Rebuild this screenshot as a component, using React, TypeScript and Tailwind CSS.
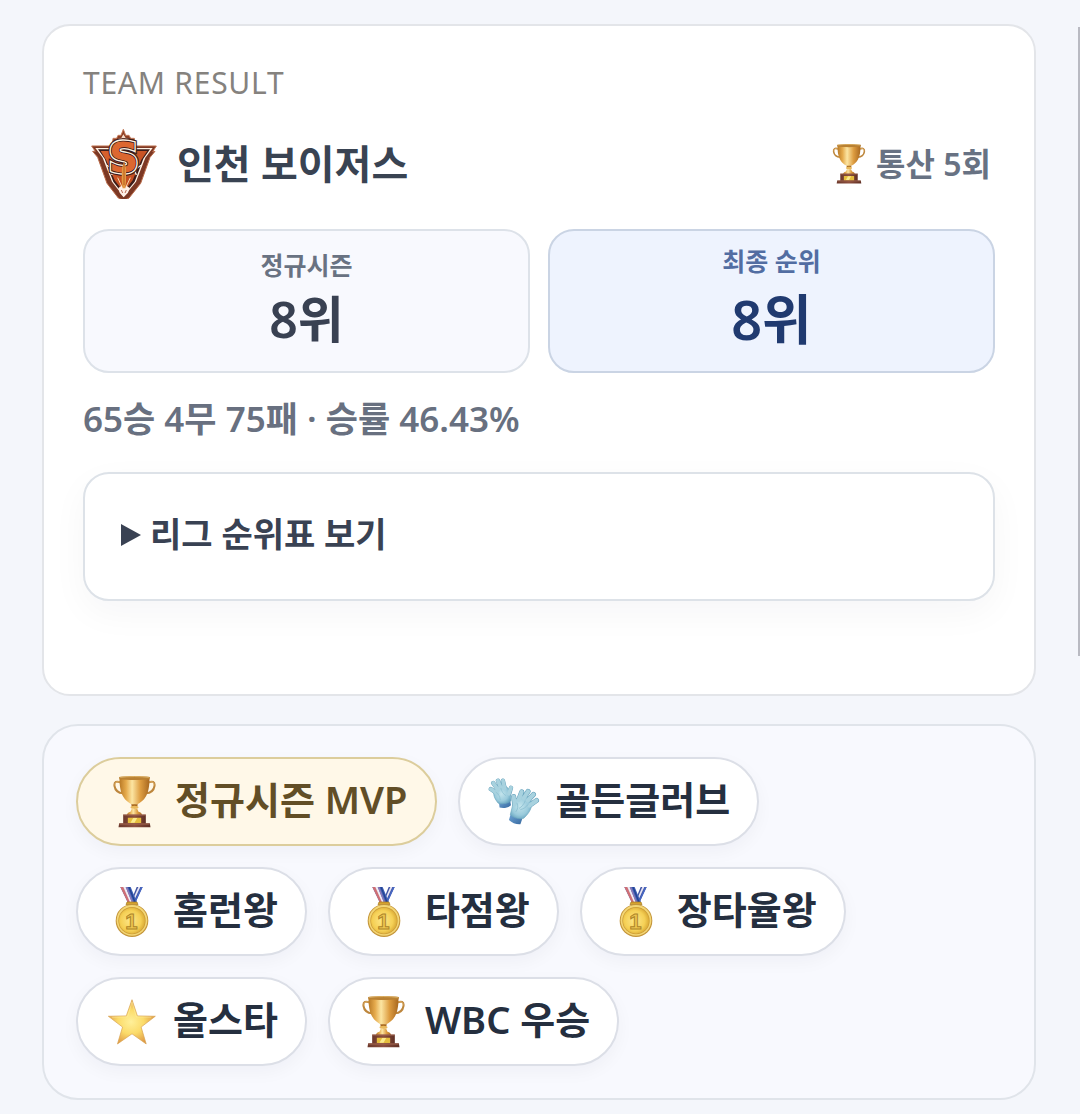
import React from 'react';

type AwardIcon = 'trophy' | 'gloves' | 'medal' | 'star';

const awards: { label: string; icon: AwardIcon; highlight?: boolean }[] = [
  { label: '정규시즌 MVP', icon: 'trophy', highlight: true },
  { label: '골든글러브', icon: 'gloves' },
  { label: '홈런왕', icon: 'medal' },
  { label: '타점왕', icon: 'medal' },
  { label: '장타율왕', icon: 'medal' },
  { label: '올스타', icon: 'star' },
  { label: 'WBC 우승', icon: 'trophy' },
];

// Shared gradients, referenced by id from every icon
function IconDefs() {
  return (
    <svg width="0" height="0" className="absolute" aria-hidden="true">
      <defs>
        <linearGradient id="cup" x1="0" x2="1" y1="0" y2="0">
          <stop offset="0" stopColor="#b97a26" />
          <stop offset="0.22" stopColor="#e5aa4c" />
          <stop offset="0.42" stopColor="#fce5a2" />
          <stop offset="0.7" stopColor="#dd9c40" />
          <stop offset="1" stopColor="#a86820" />
        </linearGradient>
        <linearGradient id="base" x1="0" x2="1" y1="0" y2="0">
          <stop offset="0" stopColor="#6b382b" />
          <stop offset="0.5" stopColor="#8d4f3e" />
          <stop offset="1" stopColor="#5f3025" />
        </linearGradient>
        <radialGradient id="glove" cx="0.45" cy="0.45" r="0.65">
          <stop offset="0" stopColor="#c3e4ec" />
          <stop offset="0.6" stopColor="#9acbdc" />
          <stop offset="1" stopColor="#5c9dba" />
        </radialGradient>
        <linearGradient id="cuff" x1="0" x2="1" y1="0" y2="1">
          <stop offset="0" stopColor="#6fa5d6" />
          <stop offset="1" stopColor="#37699f" />
        </linearGradient>
        <radialGradient id="coin" cx="0.45" cy="0.5" r="0.6">
          <stop offset="0" stopColor="#fde78a" />
          <stop offset="0.65" stopColor="#f5d055" />
          <stop offset="1" stopColor="#d3a02e" />
        </radialGradient>
        <radialGradient id="starFill" cx="0.48" cy="0.5" r="0.55">
          <stop offset="0" stopColor="#fff09a" />
          <stop offset="0.5" stopColor="#fbdb69" />
          <stop offset="1" stopColor="#dc9443" />
        </radialGradient>
        <linearGradient id="shield" x1="0" x2="1" y1="0" y2="1">
          <stop offset="0" stopColor="#d8622e" />
          <stop offset="1" stopColor="#b8441c" />
        </linearGradient>
      </defs>
    </svg>
  );
}

function Trophy({ className }: { className?: string }) {
  return (
    <svg viewBox="0 0 128 156" className={className} aria-hidden="true">
      <path d="M24 20C10 14 2 17 4 30c2 13 12 21 26 22" fill="none" stroke="#bd863c" strokeWidth="6" strokeLinecap="round" />
      <path d="M104 20c14-6 22-3 20 10-2 13-12 21-26 22" fill="none" stroke="#bd863c" strokeWidth="6" strokeLinecap="round" />
      <path d="M23 19C11 15 4 18 6 29" fill="none" stroke="#eec37a" strokeWidth="2" />
      <path d="M105 19c12-4 19-1 17 10" fill="none" stroke="#eec37a" strokeWidth="2" />
      <path d="M19 4h90c0 24-2 42-10 56-7 13-21 25-35 27-14-2-28-14-35-27C21 46 19 28 19 4Z" fill="url(#cup)" />
      <path d="M18 3c20-4 72-4 92 0l-1 7c-20 3-70 3-90 0Z" fill="#b98133" />
      <path d="M21 4c24-3 62-3 86 0" fill="none" stroke="#f0cc83" strokeWidth="2" />
      <path d="M54 85h20l-3 11H57Z" fill="#a9691d" />
      <ellipse cx="64" cy="94" rx="12" ry="5" fill="#e9b95c" />
      <path d="M56 98h16l4 9c7 2 10 5 11 11H41c1-6 4-9 11-11Z" fill="url(#cup)" />
      <path d="M30 116h68v29H30Z" fill="url(#base)" />
      <path d="M18 142h92l2 12H16Z" fill="url(#base)" />
      <path d="M30 117h68M19 144h90" stroke="#a36650" strokeWidth="3" />
      <rect x="44" y="125" width="40" height="16" rx="1" fill="#e5bd3c" />
      <path d="M52 140l8-14h12l-8 14Z" fill="#fae98c" />
    </svg>
  );
}

function Gloves({ className }: { className?: string }) {
  return (
    <svg viewBox="0 0 154 140" className={className} aria-hidden="true">
      <g strokeLinecap="round" strokeLinejoin="round">
        <path d="M32 71l33-8 3 18c-9 8-22 10-34 7Z" fill="url(#cuff)" />
        <g stroke="#659fb8" strokeWidth="13" fill="none">
          <path d="M28 47L8 33M30 36L15 15M38 30L29 8M49 30L44 8M63 47l5-18" />
        </g>
        <path d="M19 34c10-12 31-15 41-3l6 11 2 26c-10 8-26 11-38 7C20 63 12 48 19 34Z" fill="url(#glove)" stroke="#6fa9c0" strokeWidth="2" />
        <g stroke="#a8d2df" strokeWidth="11" fill="none">
          <path d="M28 47L8 33M30 36L15 15M38 30L29 8M49 30L44 8M62 47l6-18" />
        </g>
        <path d="M24 43c8 5 11 13 12 22M38 31c2 9 7 17 14 21" fill="none" stroke="#8abed0" strokeWidth="2" />
        <path d="M67 107l35 14-6 17c-12 1-25-4-34-13Z" fill="url(#cuff)" />
        <g stroke="#5f9db9" strokeWidth="15" fill="none">
          <path d="M79 79L76 55M91 65l9-24M106 60l13-20M118 67l17-18M123 82l21-15" />
        </g>
        <path d="M76 72c9-19 35-25 49-10 10 12 5 36-19 58-14 4-30-1-40-11l6-24Z" fill="url(#glove)" stroke="#6fa9c0" strokeWidth="2" />
        <g stroke="#a8d2df" strokeWidth="12" fill="none">
          <path d="M79 79L76 55M91 65l9-24M106 60l13-20M118 67l17-18M123 82l21-15" />
        </g>
        <path d="M86 75c4 8 3 17-3 25M110 69c-4 10-10 17-17 21M119 79c-7 9-14 13-22 15" fill="none" stroke="#82b8cc" strokeWidth="2" />
      </g>
    </svg>
  );
}

function Medal({ className }: { className?: string }) {
  return (
    <svg viewBox="0 0 102 154" className={className} aria-hidden="true">
      <path d="M65 2h18L61 49H46Z" fill="#4054a4" />
      <path d="M70 2h6L55 48h-5Z" fill="#e8e5f2" />
      <path d="M78 2h5L61 49h-4Z" fill="#4768c4" />
      <path d="M16 2h31l19 46H38Z" fill="#3f62b8" />
      <path d="M16 2h10l21 46h-9Z" fill="#cf6f75" />
      <path d="M25 2h7l19 46h-6Z" fill="#f1edf4" />
      <path d="M32 2h5l18 46h-5Z" fill="#8b79b5" />
      <path d="M40 2h4l18 46h-4Z" fill="#24418f" />
      <path d="M36 47h30l3 8H33Z" fill="#d5a22f" stroke="#a5771c" strokeWidth="2" />
      <circle cx="51" cy="103" r="49" fill="#c4953a" />
      <circle cx="51" cy="102" r="46" fill="#f3d675" />
      <circle cx="51" cy="103" r="41" fill="#cc9c35" />
      <circle cx="51" cy="103" r="39" fill="url(#coin)" />
      <text x="49" y="127" textAnchor="middle" fontFamily="Liberation Sans, sans-serif" fontWeight="700" fontSize="66" fill="#edc64f" stroke="#ad8429" strokeWidth="3">
        1
      </text>
    </svg>
  );
}

function Star({ className }: { className?: string }) {
  return (
    <svg viewBox="0 0 142 136" className={className} aria-hidden="true">
      <path
        d="M71 2L87 50 140 51 98 83 113 133 71 103 28 133 43 83 1 51 54 50Z"
        fill="url(#starFill)"
        stroke="#d8a14d"
        strokeWidth="2"
        strokeLinejoin="round"
      />
      <path d="M71 9L84 53 128 54M71 9L58 53 12 54" fill="none" stroke="#fff0a8" strokeWidth="2" opacity="0.7" />
    </svg>
  );
}

function TeamLogo({ className }: { className?: string }) {
  return (
    <svg viewBox="18 14 198 210" className={className} role="img" aria-label="인천 보이저스">
      <g strokeLinejoin="miter">
        {/* crown */}
        <path d="M82 62l2-20h11l4-9h9l7-18 7 18h10l5 9h11l2 20Z" fill="#8c3f25" stroke="#c47a58" strokeWidth="3" />
        <path d="M94 58l5-14 10-3 6-11 7 11 10 3 5 14Z" fill="#f7dfcc" />
        <path d="M111 57V42h10v15Z" fill="#ba4b23" />
        {/* shield */}
        <path d="M20 65h60l36-13 38 13h60l-11 17 7-1-15 18-28 78-35 44q-16 10-32 0L66 177 38 99 23 81h8Z" fill="#7c3824" stroke="#b96a48" strokeWidth="3" />
        <path d="M31 71h51l34-12 36 12h51l-22 29-28 72-37 45-35-45-28-72Z" fill="#fff2e4" />
        <path d="M39 75h46l31-11 33 11h46l-20 28-26 69-33 40-31-40-26-69Z" fill="#3d1c19" />
        <path d="M47 80h140l-18 26-26 62-27 35-27-35-26-62Z" fill="url(#shield)" />
        <path d="M64 122l22 14-6 16M170 122l-22 14 6 16" fill="none" stroke="#fff2e4" strokeWidth="4" />
      </g>
      <g fontFamily="DejaVu Sans, sans-serif" fontWeight="700" fontSize="124" textAnchor="middle" paintOrder="stroke" strokeLinejoin="miter">
        <text x="116" y="143" fill="#fff2e4" stroke="#3d1c19" strokeWidth="20">S</text>
        <text x="116" y="143" fill="#fff2e4" stroke="#fff2e4" strokeWidth="13">S</text>
        <text x="116" y="143" fill="#dc6730" stroke="#3d1c19" strokeWidth="5">S</text>
      </g>
      {/* rocket */}
      <path d="M117 112l6 18v40l-2 24h-8l-3-26 1-38Z" fill="#e39a42" />
      <path d="M117 114v68" stroke="#b65b22" strokeWidth="3" />
      <path d="M98 160l14 30M136 160l-14 30" stroke="#f6d8ad" strokeWidth="3" />
      <path d="M100 191l10-7 3 8h8l3-8 10 7-5 14-13 14-12-14Z" fill="#fff0e6" />
      <path d="M109 197l4 9M124 197l-4 9" stroke="#bd6d56" strokeWidth="3" />
    </svg>
  );
}

function AwardGlyph({ icon }: { icon: AwardIcon }) {
  if (icon === 'trophy') return <Trophy className="h-[52px] w-[43px]" />;
  if (icon === 'gloves') return <Gloves className="h-[47px] w-[52px]" />;
  if (icon === 'medal') return <Medal className="h-[52px] w-[34px]" />;
  return <Star className="h-[46px] w-[48px]" />;
}

export default function App() {
  return (
    <div className="relative min-h-screen bg-[#f4f6fb] pt-6 pr-11 pb-[14px] pl-[42px] font-['Noto_Sans','Noto_Sans_CJK_KR',sans-serif]">
      <IconDefs />

      {/* Team result card */}
      <section className="rounded-[28px] border-2 border-[#e3e5e9] bg-white px-[39px] pt-[39px] pb-[93px]">
        <h2 className="text-[30px] leading-9 tracking-wide text-[#85827e]">TEAM RESULT</h2>

        <div className="mt-7 flex items-center justify-between">
          <div className="flex items-center gap-5 pl-2">
            <TeamLogo className="h-[70px] w-[66px]" />
            <h1 className="text-[40px] leading-[60px] font-semibold text-[#394352]">인천 보이저스</h1>
          </div>
          <div className="flex items-center gap-[10px] pr-1 text-[32px] leading-[60px] font-semibold text-[#687283]">
            <Trophy className="h-10 w-[34px]" />
            통산 5회
          </div>
        </div>

        <div className="mt-[30px] grid grid-cols-2 gap-[18px] text-center">
          <div className="flex h-36 flex-col justify-center rounded-[26px] border-2 border-[#dde2e9] bg-[#f8f9fe]">
            <span className="text-[25px] leading-9 font-semibold text-[#697282]">정규시즌</span>
            <span className="text-[50px] leading-[72px] font-semibold text-[#394152]">8위</span>
          </div>
          <div className="flex h-36 flex-col justify-center rounded-[26px] border-2 border-[#cad4e4] bg-[#eef3fe]">
            <span className="text-[25px] leading-9 font-semibold text-[#526da2]">최종 순위</span>
            <span className="text-[54px] leading-[80px] font-semibold text-[#203a70]">8위</span>
          </div>
        </div>

        <p className="mt-[22px] text-[35px] leading-[48px] font-semibold text-[#687080]">65승 4무 75패 · 승률 46.43%</p>

        <details className="mt-[29px] rounded-[26px] border-2 border-[#dde2e8] bg-white px-9 pt-9 pb-10 shadow-[0_12px_36px_rgba(15,23,42,0.04)]">
          <summary className="flex cursor-pointer list-none items-center gap-[9px] text-[34px] leading-[49px] font-semibold text-[#394253]">
            <svg viewBox="0 0 20 22" className="h-[22px] w-5" aria-hidden="true">
              <path d="M0 0L20 11 0 22Z" fill="currentColor" />
            </svg>
            리그 순위표 보기
          </summary>
        </details>
      </section>

      {/* Award badges */}
      <section className="mt-7 rounded-[36px] border-2 border-[#e0e4ea] bg-[#f8f9fe] px-8 pt-[31px] pb-8">
        <ul className="flex flex-wrap gap-x-[21px] gap-y-[21px]">
          {awards.map((award) => (
            <li
              key={award.label}
              className={`flex h-[89px] items-center gap-[15px] rounded-full border-2 text-[38px] font-semibold shadow-[0_6px_18px_rgba(15,23,42,0.04)] ${
                award.highlight
                  ? 'border-[#dccd9c] bg-[#fff8e8] pr-7 pl-[30px] text-[#624e26]'
                  : 'border-[#dcdfe7] bg-white pr-[27px] pl-7 text-[#252f3f]'
              }`}
            >
              <span className="flex w-[52px] justify-center">
                <AwardGlyph icon={award.icon} />
              </span>
              <span className="pb-[5px] leading-[56px]">{award.label}</span>
            </li>
          ))}
        </ul>
      </section>

      {/* Overlay scroll thumb */}
      <div className="absolute top-[27px] right-0 h-[629px] w-[2px] bg-[#b9bac2]" />
    </div>
  );
}
